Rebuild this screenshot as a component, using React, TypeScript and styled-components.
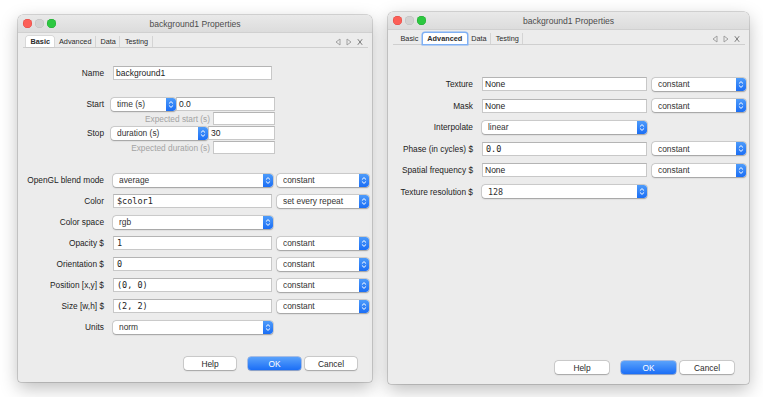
import React from 'react'
import styled, { createGlobalStyle } from 'styled-components'

const GlobalStyle = createGlobalStyle`
  body {
    margin: 0;
    background: #ffffff;
    font-family: "Liberation Sans", Arial, sans-serif;
  }
`

const Desktop = styled.div`
  display: flex;
  align-items: flex-start;
  gap: 16px;
  padding-left: 18px;
  width: 763px;
  height: 397px;
  box-sizing: border-box;
  overflow: hidden;
`

const Window = styled.div<{ $w: number; $h: number; $top: number }>`
  width: ${p => p.$w}px;
  height: ${p => p.$h}px;
  margin-top: ${p => p.$top}px;
  flex-shrink: 0;
  background: #ececec;
  border-radius: 5px 5px 3px 3px;
  box-shadow: 0 0 0 0.5px rgba(0, 0, 0, 0.28), 0 6px 18px rgba(0, 0, 0, 0.26);
  display: flex;
  flex-direction: column;
  overflow: hidden;
`

const TitleBar = styled.div`
  display: grid;
  grid-template-columns: 1fr auto 1fr;
  align-items: center;
  height: 17px;
  padding: 0 5px;
  background: linear-gradient(#e9e9e9, #dcdcdc);
  border-bottom: 1px solid #d0d0d0;
`

const Lights = styled.div`
  display: flex;
  gap: 3px;
`

const Light = styled.span<{ $c: string; $b: string }>`
  width: 9px;
  height: 9px;
  border-radius: 50%;
  background: ${p => p.$c};
  box-shadow: inset 0 0 0 0.5px ${p => p.$b};
`

const Title = styled.div`
  font-size: 8.6px;
  color: #4d4d4d;
`

const TabStrip = styled.div`
  display: flex;
  align-items: flex-end;
  height: 11px;
  margin: 3px 4px 0 5px;
  padding-left: 3px;
  border-bottom: 1px solid #cfcfcf;
`

const Tab = styled.div<{ $active?: boolean; $focus?: boolean; $sep?: boolean }>`
  height: 11px;
  line-height: 11px;
  padding: 0 4.5px;
  font-size: 7.3px;
  color: #2b2b2b;
  box-sizing: border-box;
  font-weight: ${p => (p.$active ? 'bold' : 'normal')};
  background: ${p => (p.$active ? '#ffffff' : 'transparent')};
  border-radius: ${p => (p.$active ? '2px 2px 0 0' : '0')};
  box-shadow: ${p =>
    p.$focus
      ? '0 0 0 1.5px #7fb0f4'
      : p.$active
      ? '0 0 0 0.5px #c4c4c4'
      : 'none'};
  position: relative;
  &::after {
    content: '';
    display: ${p => (p.$sep ? 'block' : 'none')};
    position: absolute;
    right: 0;
    top: 0;
    width: 1px;
    height: 11px;
    background: #d4d4d4;
  }
`

const TabNav = styled.div`
  margin-left: auto;
  align-self: center;
  display: flex;
  align-items: center;
  gap: 5px;
  padding-right: 5px;
`

const Form = styled.div<{ $pt: number; $gap: number }>`
  display: flex;
  flex-direction: column;
  gap: ${p => p.$gap}px;
  padding-top: ${p => p.$pt}px;
`

const Block = styled.div<{ $mt: number }>`
  display: flex;
  flex-direction: column;
  gap: 1px;
  margin-top: ${p => p.$mt}px;
`

const Row = styled.div<{ $h?: number; $mt?: number }>`
  display: flex;
  align-items: center;
  height: ${p => p.$h ?? 14}px;
  margin-top: ${p => p.$mt ?? 0}px;
`

const Label = styled.div<{ $w: number; $gap?: number; $muted?: boolean }>`
  width: ${p => p.$w}px;
  margin-right: ${p => p.$gap ?? 9}px;
  flex-shrink: 0;
  text-align: right;
  white-space: nowrap;
  font-size: 8.3px;
  color: ${p => (p.$muted ? '#a3a3a3' : '#1c1c1c')};
`

const TextField = styled.div<{ $w: number; $h?: number; $mono?: boolean }>`
  width: ${p => p.$w}px;
  height: ${p => p.$h ?? 14}px;
  flex-shrink: 0;
  box-sizing: border-box;
  background: #ffffff;
  border: 1px solid #c8c8c8;
  border-top-color: #b4b4b4;
  padding-left: ${p => (p.$mono ? 3 : 2)}px;
  font-family: ${p =>
    p.$mono ? '"DejaVu Sans Mono", "Liberation Mono", monospace' : 'inherit'};
  font-size: 8.5px;
  line-height: ${p => (p.$h ?? 14) - 2}px;
  color: #1c1c1c;
  white-space: nowrap;
  overflow: hidden;
`

const ComboBox = styled.div<{ $w: number; $ml?: number; $mono?: boolean }>`
  width: ${p => p.$w}px;
  height: 13px;
  margin-left: ${p => p.$ml ?? 0}px;
  flex-shrink: 0;
  display: flex;
  align-items: center;
  box-sizing: border-box;
  padding-left: 6px;
  background: #ffffff;
  border-radius: 3px;
  box-shadow: 0 0 0 0.5px rgba(0, 0, 0, 0.2), 0 0.5px 1.5px rgba(0, 0, 0, 0.25);
  font-family: ${p =>
    p.$mono ? '"DejaVu Sans Mono", "Liberation Mono", monospace' : 'inherit'};
  font-size: 8.4px;
  color: #333333;
  white-space: nowrap;
  overflow: hidden;
`

const ComboText = styled.span`
  flex: 1;
  overflow: hidden;
`

const Arrow = styled.span`
  width: 10px;
  height: 13px;
  flex-shrink: 0;
  border-radius: 0 3px 3px 0;
  background: linear-gradient(#4d9bfa, #1b6ef5);
  display: flex;
`

const ButtonBar = styled.div<{ $pb: number }>`
  margin-top: auto;
  display: flex;
  justify-content: flex-end;
  padding: 0 15px ${p => p.$pb}px 0;
`

const Button = styled.div<{ $w: number; $ml?: number; $primary?: boolean }>`
  width: ${p => p.$w}px;
  height: 13px;
  margin-left: ${p => p.$ml ?? 0}px;
  border-radius: 3px;
  display: flex;
  align-items: center;
  justify-content: center;
  font-size: 8.4px;
  color: ${p => (p.$primary ? '#ffffff' : '#2a2a2a')};
  background: ${p => (p.$primary ? 'linear-gradient(#5aa2fb, #1b6ef6)' : '#ffffff')};
  box-shadow: ${p =>
    p.$primary
      ? '0 0 0 0.5px rgba(20, 90, 220, 0.6), 0 0.5px 1px rgba(0, 0, 0, 0.2)'
      : '0 0 0 0.5px rgba(0, 0, 0, 0.22), 0 0.5px 1.5px rgba(0, 0, 0, 0.22)'};
`

const Combo = ({
  w,
  ml,
  mono,
  children,
}: {
  w: number
  ml?: number
  mono?: boolean
  children: React.ReactNode
}) => (
  <ComboBox $w={w} $ml={ml} $mono={mono}>
    <ComboText>{children}</ComboText>
    <Arrow>
      <svg width="10" height="13" viewBox="0 0 10 13">
        <path
          d="M3.2 5.3 L5 3.6 L6.8 5.3 M3.2 7.7 L5 9.4 L6.8 7.7"
          fill="none"
          stroke="#ffffff"
          strokeWidth="1"
          strokeLinecap="round"
          strokeLinejoin="round"
        />
      </svg>
    </Arrow>
  </ComboBox>
)

const WindowTitle = ({ title }: { title: string }) => (
  <TitleBar>
    <Lights>
      <Light $c="#fc5f57" $b="#df4741" />
      <Light $c="#d2d2d2" $b="#bdbdbd" />
      <Light $c="#2cc840" $b="#1fa72f" />
    </Lights>
    <Title>{title}</Title>
    <span />
  </TitleBar>
)

const TABS = ['Basic', 'Advanced', 'Data', 'Testing']

const Tabs = ({ active, focus }: { active: string; focus?: boolean }) => {
  const ai = TABS.indexOf(active)
  return (
    <TabStrip>
      {TABS.map((t, i) => (
        <Tab
          key={t}
          $active={t === active}
          $focus={focus && t === active}
          $sep={i !== ai && i + 1 !== ai}
        >
          {t}
        </Tab>
      ))}
      <TabNav>
        <svg width="6" height="8" viewBox="0 0 6 8">
          <polygon points="5,1 5,7 1,4" fill="none" stroke="#9a9a9a" strokeWidth="0.9" />
        </svg>
        <svg width="6" height="8" viewBox="0 0 6 8">
          <polygon points="1,1 1,7 5,4" fill="none" stroke="#9a9a9a" strokeWidth="0.9" />
        </svg>
        <svg width="6" height="8" viewBox="0 0 6 8">
          <path d="M0.8 1.2 L5.2 6.8 M5.2 1.2 L0.8 6.8" stroke="#7a7a7a" strokeWidth="1" />
        </svg>
      </TabNav>
    </TabStrip>
  )
}

const Buttons = ({ w, pb }: { w: number; pb: number }) => (
  <ButtonBar $pb={pb}>
    <Button $w={w}>Help</Button>
    <Button $w={w + 1} $ml={12} $primary>
      OK
    </Button>
    <Button $w={w} $ml={4}>
      Cancel
    </Button>
  </ButtonBar>
)

const BasicWindow = () => (
  <Window $w={354} $h={367} $top={15}>
    <WindowTitle title="background1 Properties" />
    <Tabs active="Basic" />
    <Form $pt={18} $gap={7}>
      <Row>
        <Label $w={86}>Name</Label>
        <TextField $w={159}>background1</TextField>
      </Row>
      <Block $mt={10}>
        <Row>
          <Label $w={86}>Start</Label>
          <Combo w={65} ml={-2}>time (s)</Combo>
          <TextField $w={99}>0.0</TextField>
        </Row>
        <Row $h={13}>
          <Label $w={192} $gap={3} $muted>
            Expected start (s)
          </Label>
          <TextField $w={62} $h={13} />
        </Row>
        <Row>
          <Label $w={86}>Stop</Label>
          <Combo w={97} ml={-2}>duration (s)</Combo>
          <TextField $w={67}>30</TextField>
        </Row>
        <Row $h={13}>
          <Label $w={192} $gap={3} $muted>
            Expected duration (s)
          </Label>
          <TextField $w={62} $h={13} />
        </Row>
      </Block>
      <Row $mt={12}>
        <Label $w={86}>OpenGL blend mode</Label>
        <Combo w={160}>average</Combo>
        <Combo w={92} ml={4}>constant</Combo>
      </Row>
      <Row>
        <Label $w={86}>Color</Label>
        <TextField $w={159} $mono>$color1</TextField>
        <Combo w={92} ml={5}>set every repeat</Combo>
      </Row>
      <Row>
        <Label $w={86}>Color space</Label>
        <Combo w={160}>rgb</Combo>
      </Row>
      <Row>
        <Label $w={86}>Opacity $</Label>
        <TextField $w={159} $mono>1</TextField>
        <Combo w={92} ml={5}>constant</Combo>
      </Row>
      <Row>
        <Label $w={86}>Orientation $</Label>
        <TextField $w={159} $mono>0</TextField>
        <Combo w={92} ml={5}>constant</Combo>
      </Row>
      <Row>
        <Label $w={86}>Position [x,y] $</Label>
        <TextField $w={159} $mono>(0, 0)</TextField>
        <Combo w={92} ml={5}>constant</Combo>
      </Row>
      <Row>
        <Label $w={86}>Size [w,h] $</Label>
        <TextField $w={159} $mono>(2, 2)</TextField>
        <Combo w={92} ml={5}>constant</Combo>
      </Row>
      <Row>
        <Label $w={86}>Units</Label>
        <Combo w={160}>norm</Combo>
      </Row>
    </Form>
    <Buttons w={52} pb={12} />
  </Window>
)

const AdvancedWindow = () => (
  <Window $w={361} $h={372} $top={12}>
    <WindowTitle title="background1 Properties" />
    <Tabs active="Advanced" focus />
    <Form $pt={32} $gap={7.5}>
      <Row>
        <Label $w={85}>Texture</Label>
        <TextField $w={165}>None</TextField>
        <Combo w={94} ml={5}>constant</Combo>
      </Row>
      <Row>
        <Label $w={85}>Mask</Label>
        <TextField $w={165}>None</TextField>
        <Combo w={94} ml={5}>constant</Combo>
      </Row>
      <Row>
        <Label $w={85}>Interpolate</Label>
        <Combo w={165}>linear</Combo>
      </Row>
      <Row>
        <Label $w={85}>Phase (in cycles) $</Label>
        <TextField $w={165} $mono>0.0</TextField>
        <Combo w={94} ml={5}>constant</Combo>
      </Row>
      <Row>
        <Label $w={85}>Spatial frequency $</Label>
        <TextField $w={165}>None</TextField>
        <Combo w={94} ml={5}>constant</Combo>
      </Row>
      <Row>
        <Label $w={85}>Texture resolution $</Label>
        <Combo w={165} mono>128</Combo>
      </Row>
    </Form>
    <Buttons w={54} pb={10} />
  </Window>
)

export default function App() {
  return (
    <>
      <GlobalStyle />
      <Desktop>
        <BasicWindow />
        <AdvancedWindow />
      </Desktop>
    </>
  )
}
